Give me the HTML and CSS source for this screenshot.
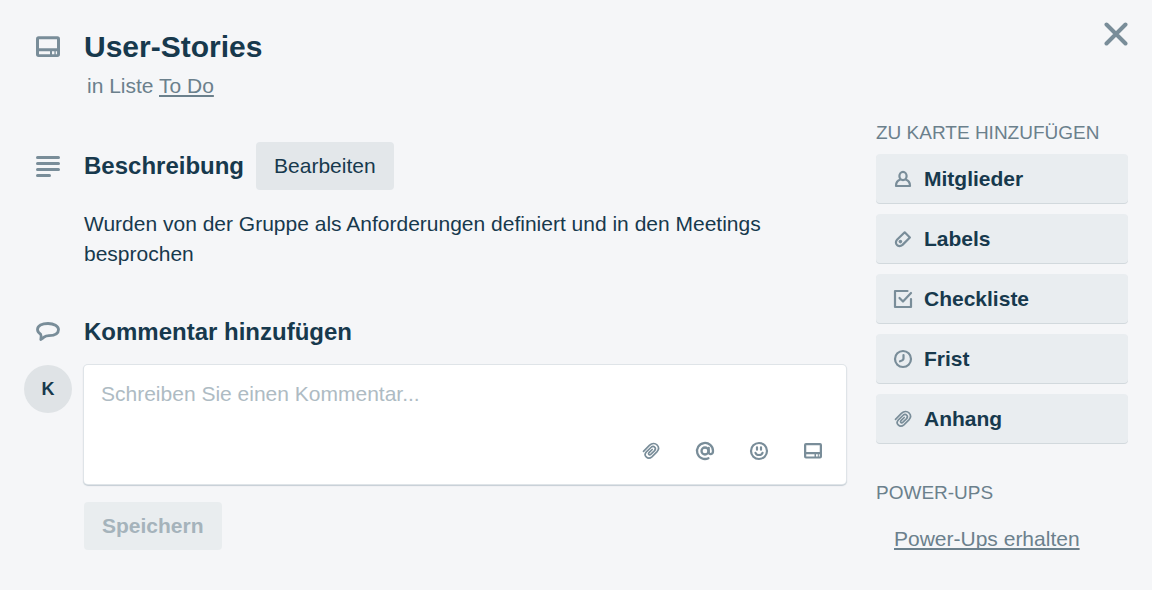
FILE: index.html
```html
<!DOCTYPE html>
<html lang="de">
<head>
<meta charset="utf-8">
<meta name="viewport" content="width=device-width, initial-scale=1">
<title>User-Stories</title>
<link rel="stylesheet" href="styles.css">
</head>
<body>
<svg class="sprite" aria-hidden="true">
  <symbol id="icon-card" viewBox="0 0 24 24">
    <path fill="currentColor" fill-rule="evenodd" d="M5 4h14a2 2 0 0 1 2 2v11.500a2 2 0 0 1-2 2H5a2 2 0 0 1-2-2V6a2 2 0 0 1 2-2zm.250 2.250v6.750h13.500V6.250H5.250zm0 9v2.250h8.250v-2.250H5.250zm9.750 0v2.250h1.800v-2.250H15zm2.800 0v2.250h1v-2.250h-1z"/>
  </symbol>
  <symbol id="icon-clip" viewBox="0 0 24 24">
    <path fill="none" stroke="currentColor" stroke-width="1.700" stroke-linecap="round" stroke-linejoin="round" d="M4.500 12.300 10.400 6.400C13 3.900 16.200 4 18.100 6C20 8 19.800 10.800 17.900 12.900L12.900 17.800C11 19.500 8.700 19.400 7.200 17.900C5.700 16.400 5.900 14.400 7.400 12.800L11.900 8.500C13.200 7.300 14.700 7.200 15.800 8.300C16.800 9.400 16.500 10.700 15.400 11.900L12 15.200C11.200 15.900 10.300 16 9.800 15.500C9.300 15 9.400 14.300 10 13.600L13.200 10.500"/>
  </symbol>
</svg>
<main class="card">
  <header class="card-header">
    <svg class="icon-large header-icon"><use href="#icon-card"/></svg>
    <div class="header-text">
      <h1 class="card-title">User-Stories</h1>
      <p class="card-list">in Liste <a href="#todo">To Do</a></p>
    </div>
    <button class="close" type="button" aria-label="Schließen">
      <svg class="close-icon" viewBox="0 0 24 24" fill="none" stroke="currentColor" stroke-width="4" stroke-linecap="round"><path d="m2.500 2.500 19 19m0-19-19 19"/></svg>
    </button>
  </header>

  <div class="columns">
    <div class="content">
      <section class="section">
        <div class="section-head">
          <svg class="icon-large" viewBox="0 0 32 32" fill="none" stroke="currentColor" stroke-width="3" stroke-linecap="round"><path d="M5.500 7.500h21M5.500 13.500h21M5.500 19.500h21M5.500 25.500h12"/></svg>
          <h2 class="section-title">Beschreibung</h2>
          <button class="button" type="button">Bearbeiten</button>
        </div>
        <p class="description">Wurden von der Gruppe als Anforderungen definiert und in den Meetings besprochen</p>
      </section>

      <section class="section">
        <div class="section-head comment-head">
          <svg class="icon-large" viewBox="-4 -6 32 32" fill="none" stroke="currentColor" stroke-width="2.800" stroke-linejoin="round"><path d="M4.600 12.200C2.600 11 1.500 9.400 1.500 7.600C1.500 3.600 6 1.500 12 1.500S22.500 4 22.500 7.500C22.500 11.500 19 13.500 13 13.700C10.500 13.800 9.500 14 8.500 14.800C7.500 15.800 6 17 4.800 17.500C5.200 15.800 5.300 13.500 4.600 12.200Z"/></svg>
          <h2 class="section-title"><label for="comment">Kommentar hinzufügen</label></h2>
        </div>
        <form class="comment-row">
          <span class="avatar">K</span>
          <div class="comment-body">
            <div class="comment-box">
              <textarea class="comment-input" id="comment" rows="1" placeholder="Schreiben Sie einen Kommentar..."></textarea>
              <div class="tools">
                <button class="tool" type="button" aria-label="Anhang hinzufügen"><svg class="icon"><use href="#icon-clip"/></svg></button>
                <button class="tool" type="button" aria-label="Mitglied erwähnen"><svg class="icon" viewBox="0 0 24 24" fill="none" stroke="currentColor" stroke-width="2.300" stroke-linecap="round"><circle cx="12" cy="12" r="3.500"/><path d="M15.700 8.800v4.200c0 3 4.300 3 4.300-1a8 8 0 1 0-4.600 7.200"/></svg></button>
                <button class="tool" type="button" aria-label="Emoji hinzufügen"><svg class="icon" viewBox="0 0 24 24" fill="none" stroke="currentColor" stroke-width="2.200" stroke-linecap="round"><circle cx="12" cy="12" r="8"/><path d="M10 8.300v2.400m4-2.400v2.400M8.500 13.800c.6 1.500 1.900 2.200 3.500 2.200s2.900-.7 3.500-2.200"/></svg></button>
                <button class="tool" type="button" aria-label="Karte hinzufügen"><svg class="icon"><use href="#icon-card"/></svg></button>
              </div>
            </div>
            <button class="button save" type="submit" disabled>Speichern</button>
          </div>
        </form>
      </section>
    </div>

    <aside class="sidebar">
      <h3 class="sidebar-title">ZU KARTE HINZUFÜGEN</h3>
      <div class="actions">
        <button class="action" type="button"><svg class="icon" viewBox="0 0 24 24" fill="none" stroke="currentColor" stroke-width="2.200" stroke-linejoin="round"><ellipse cx="12" cy="9" rx="3.600" ry="4.100"/><path d="M9.500 12.700C6.200 13.400 5 15.600 5 19h14c0-3.400-1.200-5.600-4.500-6.300"/></svg>Mitglieder</button>
        <button class="action" type="button"><svg class="icon" viewBox="0 0 24 24" fill="none" stroke="currentColor" stroke-width="2.200" stroke-linejoin="round"><path d="m13.700 5.300 5.200 5.200-7.400 7.400c-2 1.600-4.400 1.400-5.500.1-1.400-1.200-1.500-3.600 0-5.200z"/><circle cx="9.400" cy="14.600" r="1.800" fill="currentColor" stroke="none"/></svg>Labels</button>
        <button class="action" type="button"><svg class="icon" viewBox="0 0 24 24" fill="none" stroke="currentColor" stroke-width="2.200" stroke-linecap="round" stroke-linejoin="round"><path d="M16.500 4H4v16h16v-8M8.500 11l3.500 3.500 8-8.500"/></svg>Checkliste</button>
        <button class="action" type="button"><svg class="icon" viewBox="0 0 24 24" fill="none" stroke="currentColor" stroke-width="2.200" stroke-linecap="round"><circle cx="12" cy="12" r="8"/><path d="M12.500 8v3.500c0 1.500-1 2-3.500 2.800"/></svg>Frist</button>
        <button class="action" type="button"><svg class="icon"><use href="#icon-clip"/></svg>Anhang</button>
      </div>
      <h3 class="sidebar-title">POWER-UPS</h3>
      <a class="power-link" href="#power-ups">Power-Ups erhalten</a>
    </aside>
  </div>
</main>
</body>
</html>
```

FILE: styles.css
```css
* {
  box-sizing: border-box;
}

body {
  margin: 0;
  background: #f5f6f8;
  color: #17394d;
  font: 21px/30px "Liberation Sans", Arial, sans-serif;
}

h1, h2, h3, p {
  margin: 0;
}

button, textarea {
  font: inherit;
  color: inherit;
  border: 0;
  margin: 0;
}

svg {
  display: block;
  flex: none;
}

.sprite {
  position: absolute;
  width: 0;
  height: 0;
}

.icon-large {
  width: 32px;
  height: 32px;
  margin: 0 20px 0 8px;
  color: #798d99;
}

.icon {
  width: 24px;
  height: 24px;
  color: #798d99;
}

.card-header {
  display: flex;
  align-items: flex-start;
  padding: 10px 12px 0 24px;
}

.card-header .header-icon {
  margin-top: 21px;
}

.header-text {
  flex: 1;
  padding-top: 19px;
}

.card-title {
  font-size: 30px;
  line-height: 36px;
}

.card-list {
  margin: 6px 0 0 3px;
  color: #6b808c;
}

.card-list a, .power-link {
  color: #6b808c;
  text-decoration: underline;
  text-decoration-thickness: 2px;
  text-underline-offset: 2px;
  text-decoration-skip-ink: none;
}

.close {
  display: grid;
  place-items: center;
  width: 48px;
  height: 48px;
  padding: 0;
  background: none;
  color: #798d99;
}

.close-icon {
  width: 24px;
  height: 24px;
}

.columns {
  display: flex;
  gap: 30px;
  padding: 20px 24px 40px;
}

.content {
  flex: 1;
  min-width: 0;
  padding-top: 21px;
}

.section-head {
  display: flex;
  align-items: center;
}

.comment-head {
  margin-top: 47px;
}

.section-title {
  font-size: 24px;
  line-height: 30px;
}

.button {
  height: 48px;
  padding: 0 18px;
  border-radius: 4px;
  background: #e3e7ea;
}

.section-title + .button {
  margin-left: 12px;
}

.description {
  margin: 19px 0 0 60px;
}

.comment-row {
  display: flex;
  align-items: flex-start;
  gap: 12px;
  margin-top: 17px;
}

.avatar {
  width: 48px;
  height: 48px;
  border-radius: 50%;
  background: #dfe3e6;
  font-size: 18px;
  font-weight: bold;
  line-height: 48px;
  text-align: center;
}

.comment-body {
  flex: 1;
}

.comment-box {
  border-radius: 4px;
  background: #fff;
  box-shadow: 0 0 0 1px #dfe4e8, 0 1px 1px 1px #c5ced4;
}

.comment-input {
  display: block;
  width: 100%;
  height: 62px;
  padding: 14px 17px;
  background: none;
  resize: none;
}

.comment-input::placeholder {
  color: #aebbc3;
  opacity: 1;
}

.tools {
  display: flex;
  justify-content: flex-end;
  gap: 6px;
  padding: 0 9px 9px;
}

.tool {
  display: grid;
  place-items: center;
  width: 48px;
  height: 48px;
  padding: 0;
  background: none;
}

.save {
  margin-top: 18px;
  background: #e9edef;
  color: #a5b3bb;
  font-weight: bold;
}

.sidebar {
  flex: 0 0 252px;
}

.sidebar-title {
  color: #6b808c;
  font-size: 19px;
  font-weight: normal;
  line-height: 24px;
}

.actions {
  display: grid;
  gap: 11px;
  margin: 9px 0 38px;
}

.action {
  display: flex;
  align-items: center;
  gap: 9px;
  height: 49px;
  padding: 0 15px;
  border-radius: 4px;
  background: #e9edf0;
  box-shadow: 0 1px 0 #d2d9dd;
  font-weight: bold;
}

.power-link {
  display: block;
  margin: 19px 18px 0;
}
```
